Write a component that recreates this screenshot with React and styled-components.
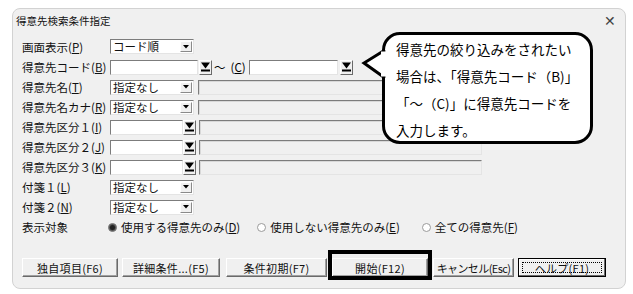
import React from 'react';
import styled, { createGlobalStyle } from 'styled-components';

const GlobalStyle = createGlobalStyle`
  body {
    margin: 0;
    background: #ffffff;
    font-family: "Noto Sans CJK JP", "DejaVu Sans", sans-serif;
    color: #000;
  }
`;

const Window = styled.div`
  position: relative;
  box-sizing: border-box;
  margin: 8px 0 0 12px;
  width: 614px;
  height: 281px;
  background: #f0f0f0;
  border: 1px solid #d2d2d2;
  border-radius: 8px;
  overflow: hidden;
`;

const TitleBar = styled.div`
  display: flex;
  align-items: center;
  justify-content: space-between;
  height: 22px;
  padding: 0 9px 0 3px;
  font-size: 10.5px;
  color: #111;
`;

const Close = styled.span`
  font-size: 14px;
  font-weight: 300;
  color: #444;
`;

const Form = styled.div`
  display: flex;
  flex-direction: column;
  padding: 5px 0 0 9px;
`;

const Row = styled.div`
  display: flex;
  align-items: center;
  height: ${({ $h }) => $h || 20}px;
`;

const Label = styled.span`
  width: 88px;
  font-size: 11.5px;
  color: #111;
  white-space: nowrap;
`;

const Field = styled.div`
  box-sizing: border-box;
  display: flex;
  align-items: center;
  justify-content: space-between;
  width: ${({ $w }) => $w}px;
  height: 15px;
  margin-left: ${({ $ml }) => $ml || 0}px;
  padding-left: 2px;
  background: ${({ $disabled }) => ($disabled ? '#f0f0f0' : '#ffffff')};
  border: 1px solid;
  border-color: #7c7c7c #e4e4e4 #e4e4e4 #7c7c7c;
  box-shadow: ${({ $disabled }) => ($disabled ? 'inset 1px 1px #d8d8d8' : 'none')};
  font-size: 11.5px;
  line-height: 13px;
  color: #111;
  white-space: nowrap;
`;

const SmallArrow = styled.span`
  box-sizing: border-box;
  display: flex;
  align-items: center;
  justify-content: center;
  width: 12px;
  height: 11px;
  margin-right: 1px;
  background: #f0f0f0;
  border: 1px solid;
  border-color: #fff #8a8a8a #8a8a8a #fff;
`;

const DropButton = styled.span`
  box-sizing: border-box;
  display: flex;
  align-items: center;
  justify-content: center;
  width: 13px;
  height: 15px;
  margin-left: ${({ $ml }) => $ml || 0}px;
  background: #f0f0f0;
  border: 1px solid;
  border-color: #fff #6a6a6a #6a6a6a #fff;
`;

const Sep = styled.span`
  font-size: 11.5px;
  margin-left: ${({ $ml }) => $ml || 0}px;
  white-space: nowrap;
`;

const RadioOption = styled.span`
  display: flex;
  align-items: center;
  gap: 4px;
  margin-left: ${({ $ml }) => $ml || 0}px;
  font-size: 11.5px;
  color: #111;
  white-space: nowrap;
`;

const Dot = styled.span`
  box-sizing: border-box;
  width: 9px;
  height: 9px;
  border-radius: 50%;
  background: ${({ $on }) => ($on ? '#222' : '#fff')};
  border: 1px solid ${({ $on }) => ($on ? '#888' : '#9a9a9a')};
  box-shadow: ${({ $on }) => ($on ? 'inset 0 0 0 1px #555' : 'none')};
`;

const ButtonBar = styled.div`
  display: flex;
  align-items: center;
  margin-top: 21px;
`;

const Button = styled.div`
  position: relative;
  box-sizing: border-box;
  display: flex;
  align-items: center;
  justify-content: center;
  width: ${({ $w }) => $w}px;
  height: 19px;
  margin-left: ${({ $ml }) => $ml || 0}px;
  background: #f0f0f0;
  border: 1px solid;
  border-color: ${({ $default }) => ($default ? '#000' : '#fff #6a6a6a #6a6a6a #fff')};
  box-shadow: ${({ $default }) => ($default ? 'inset -1px -1px #6a6a6a, inset 1px 1px #fff' : 'inset -1px -1px #a0a0a0')};
  font-size: 11px;
  letter-spacing: ${({ $tight }) => ($tight ? '-0.6px' : '0.3px')};
  color: #111;
  white-space: nowrap;

  ${({ $focus }) =>
    $focus &&
    `&::before {
      content: '';
      position: absolute;
      inset: 3px 3px 3px 3px;
      border: 1px dotted #000;
    }`}

  ${({ $marked }) =>
    $marked &&
    `&::after {
      content: '';
      position: absolute;
      top: -9px;
      left: -5px;
      right: -5px;
      bottom: -4px;
      border: 4px solid #000;
    }`}
`;

const Bubble = styled.div`
  position: absolute;
  left: 369px;
  top: 23px;
  box-sizing: border-box;
  width: 211px;
  height: 112px;
  padding: 1px 0 0 11px;
  background: #fff;
  border: 3px solid #000;
  border-radius: 18px;
  font-size: 13.5px;
  line-height: 27px;
  white-space: nowrap;
`;

const Tail = styled.svg`
  position: absolute;
  left: -25px;
  top: 12px;
`;

const Mn = ({ c }) => (
  <>
    (<u>{c}</u>)
  </>
);

const ComboArrow = () => (
  <SmallArrow>
    <svg width="6" height="4" viewBox="0 0 6 4">
      <path d="M0 0 H6 L3 3.5 Z" fill="#000" />
    </svg>
  </SmallArrow>
);

const BigArrow = ({ ml }) => (
  <DropButton $ml={ml}>
    <svg width="9" height="10" viewBox="0 0 9 10">
      <path d="M0 0.5 H9 L4.5 6.5 Z" fill="#000" />
      <rect x="0" y="7.5" width="9" height="2" fill="#000" />
    </svg>
  </DropButton>
);

const Combo = ({ text, w = 84 }) => (
  <Field $w={w}>
    <span>{text}</span>
    <ComboArrow />
  </Field>
);

const Disabled = () => <Field $w={283} $ml={4} $disabled />;

const Picker = () => (
  <>
    <Field $w={73} />
    <BigArrow ml={0} />
    <Field $w={283} $ml={3} $disabled />
  </>
);

const Radio = ({ on, ml, text, c }) => (
  <RadioOption $ml={ml}>
    <Dot $on={on} />
    <span>
      {text}
      <Mn c={c} />
    </span>
  </RadioOption>
);

export default function App() {
  return (
    <>
      <GlobalStyle />
      <Window>
        <TitleBar>
          <span>得意先検索条件指定</span>
          <Close>✕</Close>
        </TitleBar>
        <Form>
          <Row $h={21}>
            <Label>画面表示<Mn c="P" /></Label>
            <Combo text="コード順" />
          </Row>
          <Row>
            <Label>得意先コード<Mn c="B" /></Label>
            <Field $w={88} />
            <BigArrow ml={1} />
            <Sep $ml={2}>〜</Sep>
            <Sep $ml={5}><Mn c="C" /></Sep>
            <Field $w={89} $ml={3} />
            <BigArrow ml={2} />
          </Row>
          <Row>
            <Label>得意先名<Mn c="T" /></Label>
            <Combo text="指定なし" />
            <Disabled />
          </Row>
          <Row>
            <Label>得意先名カナ<Mn c="R" /></Label>
            <Combo text="指定なし" />
            <Disabled />
          </Row>
          <Row>
            <Label>得意先区分１<Mn c="I" /></Label>
            <Picker />
          </Row>
          <Row>
            <Label>得意先区分２<Mn c="J" /></Label>
            <Picker />
          </Row>
          <Row>
            <Label>得意先区分３<Mn c="K" /></Label>
            <Picker />
          </Row>
          <Row>
            <Label>付箋１<Mn c="L" /></Label>
            <Combo text="指定なし" />
          </Row>
          <Row>
            <Label>付箋２<Mn c="N" /></Label>
            <Combo text="指定なし" />
          </Row>
          <Row>
            <Label>表示対象</Label>
            <Radio on ml={-2} text="使用する得意先のみ" c="D" />
            <Radio ml={17} text="使用しない得意先のみ" c="E" />
            <Radio ml={22} text="全ての得意先" c="F" />
          </Row>
          <ButtonBar>
            <Button $w={96}>独自項目(F6)</Button>
            <Button $w={98} $ml={4}>詳細条件...(F5)</Button>
            <Button $w={101} $ml={6}>条件初期(F7)</Button>
            <Button $w={96} $ml={5} $marked>開始(F12)</Button>
            <Button $w={81} $ml={5} $tight>キャンセル(Esc)</Button>
            <Button $w={88} $ml={4} $default $focus>ヘルプ(F1)</Button>
          </ButtonBar>
        </Form>
        <Bubble>
          <Tail width="30" height="34" viewBox="0 0 30 34">
            <path d="M25 3 L4 16 L25 31" fill="#fff" stroke="#000" strokeWidth="3" strokeLinejoin="miter" />
            <rect x="21" y="4.5" width="9" height="25" fill="#fff" />
          </Tail>
          <div>得意先の絞り込みをされたい</div>
          <div>場合は、「得意先コード（B)」</div>
          <div>「〜（C)」に得意先コードを</div>
          <div>入力します。</div>
        </Bubble>
      </Window>
    </>
  );
}
